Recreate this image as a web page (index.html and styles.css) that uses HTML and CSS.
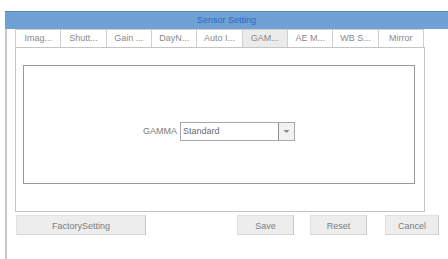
FILE: index.html
```html
<!DOCTYPE html>
<html lang="en">
<head>
  <meta charset="UTF-8">
  <title>Sensor Setting</title>
  <link rel="stylesheet" href="styles.css">
</head>
<body>
<div class="window">
  <div class="titlebar">Sensor Setting</div>
  <div class="content">
    <div class="tabs">
      <div class="tab">Imag...</div>
      <div class="tab">Shutt...</div>
      <div class="tab">Gain ...</div>
      <div class="tab">DayN...</div>
      <div class="tab">Auto I...</div>
      <div class="tab active">GAM...</div>
      <div class="tab">AE M...</div>
      <div class="tab">WB S...</div>
      <div class="tab">Mirror</div>
    </div>
    <div class="panel">
      <div class="group">
        <span class="label">GAMMA</span>
        <div class="select">
          <span class="value">Standard</span>
          <span class="arrow">
            <svg width="7" height="5" viewBox="0 0 7 5"><path d="M0.5 1 L3.5 4 L6.5 1 Z" fill="#888"/></svg>
          </span>
        </div>
      </div>
    </div>
    <div class="buttons">
      <div class="btn factory">FactorySetting</div>
      <div class="btn save">Save</div>
      <div class="btn reset">Reset</div>
      <div class="btn cancel">Cancel</div>
    </div>
  </div>
</div>
</body>
</html>
```

FILE: styles.css
```css
body {
    margin: 0;
    background-color: #ffffff;
    font-family: "Liberation Sans", Arial, sans-serif;
    font-size: 9px;
    color: #808080;
    width: 448px;
    height: 259px;
    overflow: hidden;
}

.window {
    margin-top: 11px;
    margin-left: 5px;
}

.titlebar {
    height: 17px;
    line-height: 17px;
    background-color: #6fa1d4;
    border-top: 1px solid #5d88b8;
    color: #2f66c4;
    text-align: center;
    font-size: 9px;
}

.content {
    border-left: 2px solid #c8c8c8;
    height: 230px;
    padding-left: 8px;
}

.tabs {
    display: flex;
    width: 409px;
    height: 18px;
}

.tab {
    flex: 1;
    border: 1px solid #cfcfcf;
    border-left: none;
    border-bottom: none;
    text-align: center;
    line-height: 17px;
    color: #8a8a8a;
    white-space: nowrap;
    overflow: hidden;
}

.tab:first-child {
    border-left: 1px solid #cfcfcf;
}

.tab.active {
    background-color: #ebebeb;
}

.panel {
    width: 392px;
    height: 121px;
    border: 1px solid #c4c4c4;
    padding: 17px 9px 25px 7px;
}

.group {
    height: 119px;
    border: 1px solid #9a9a9a;
    display: flex;
    align-items: center;
    justify-content: center;
    padding-top: 13px;
    box-sizing: border-box;
}

.label {
    color: #7a7a7a;
    margin-right: 3px;
}

.select {
    display: flex;
    width: 115px;
    height: 19px;
    border: 1px solid #a8a8a8;
    box-sizing: border-box;
}

.value {
    flex: 1;
    line-height: 17px;
    padding-left: 2px;
    color: #6a6a6a;
    border-right: 1px solid #8f8f8f;
}

.arrow {
    width: 15px;
    display: flex;
    align-items: center;
    justify-content: center;
    background-color: #f2f2f2;
}

.buttons {
    display: flex;
    margin-top: 3px;
    height: 20px;
}

.btn {
    height: 20px;
    line-height: 20px;
    box-sizing: border-box;
    text-align: center;
    background-color: #ededed;
    border: 1px solid #e0e0e0;
    border-right-color: #c8c8c8;
    border-bottom-color: #d4d4d4;
    color: #7c7c7c;
}

.factory {
    width: 130px;
    margin-left: 1px;
}

.save {
    width: 57px;
    margin-left: 91px;
}

.reset {
    width: 57px;
    margin-left: 16px;
}

.cancel {
    width: 54px;
    margin-left: 18px;
}
```
